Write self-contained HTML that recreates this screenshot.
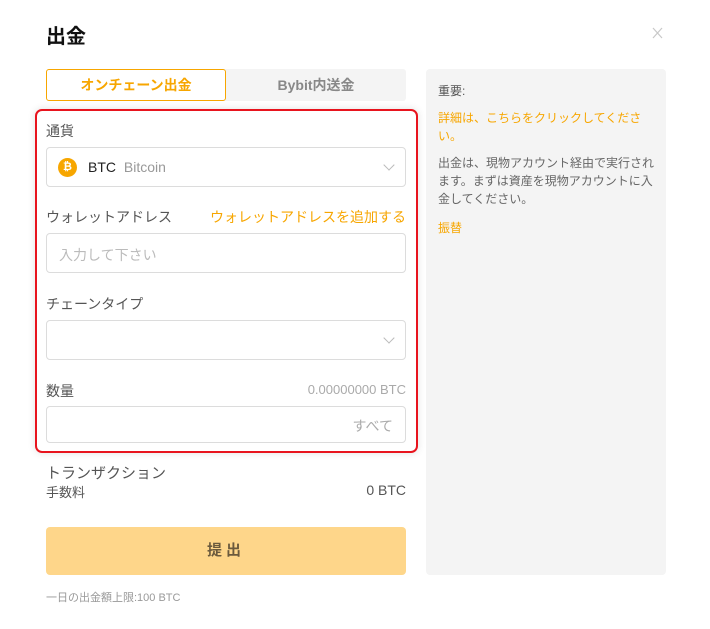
<!DOCTYPE html>
<html><head><meta charset="utf-8"><style>
*{margin:0;padding:0;box-sizing:border-box}
body{width:710px;height:629px;background:#fff;font-family:"Liberation Sans","Noto Sans CJK JP",sans-serif;position:relative;overflow:hidden;color:#333}
.a{position:absolute;white-space:nowrap}
.box{position:absolute;left:46px;width:360px;border:1px solid #dcdcdc;border-radius:4px;background:#fff}
.chev{position:absolute;right:12px;width:8px;height:8px;border-right:1px solid #bbb;border-bottom:1px solid #bbb;transform:rotate(45deg)}
.lbl{font-size:14px;color:#555}
</style></head><body>
<div class="a" style="left:46px;top:20px;font-size:20px;font-weight:bold;color:#111">出金</div>
<svg class="a" style="left:652px;top:27px" width="11" height="12" viewBox="0 0 11 12"><path d="M1 1L10 11M10 1L1 11" stroke="#c8c8c8" stroke-width="1.2" fill="none"/></svg>

<div class="a" style="left:46px;top:69px;width:360px;height:32px;background:#f4f4f4;border-radius:3px"></div>
<div class="a" style="left:46px;top:69px;width:180px;height:32px;border:1px solid #f7a600;border-radius:3px;background:#fff;text-align:center;line-height:30px;font-size:14px;font-weight:bold;color:#f7a600">オンチェーン出金</div>
<div class="a" style="left:226px;top:69px;width:180px;height:32px;text-align:center;line-height:32px;font-size:14px;font-weight:bold;color:#888">Bybit内送金</div>

<div class="a" style="left:35px;top:109px;width:383px;height:344px;border:2px solid #e8141e;border-radius:7px;box-shadow:0 0 8px rgba(0,0,0,.12)"></div>

<div class="a lbl" style="left:46px;top:121px">通貨</div>
<div class="box" style="top:147px;height:40px">
 <div class="a" style="left:11px;top:10px;width:19px;height:19px;border-radius:50%;background:#f7a600;color:#fff;font-size:11px;font-weight:bold;text-align:center;line-height:19px">₿</div>
 <div class="a" style="left:41px;top:11px;font-size:14px;color:#222">BTC <span style="color:#999;margin-left:4px">Bitcoin</span></div>
 <div class="chev" style="top:13px"></div>
</div>

<div class="a lbl" style="left:46px;top:207px">ウォレットアドレス</div>
<div class="a" style="right:304px;top:207px;font-size:14px;color:#f7a600">ウォレットアドレスを追加する</div>
<div class="box" style="top:233px;height:40px"><div class="a" style="left:12px;top:11px;font-size:14px;color:#bbb">入力して下さい</div></div>

<div class="a lbl" style="left:46px;top:294px">チェーンタイプ</div>
<div class="box" style="top:320px;height:40px"><div class="chev" style="top:13px"></div></div>

<div class="a lbl" style="left:46px;top:381px">数量</div>
<div class="a" style="right:304px;top:382px;font-size:13px;color:#aaa">0.00000000 BTC</div>
<div class="box" style="top:406px;height:37px"><div class="a" style="right:12px;top:9px;font-size:14px;color:#aaa">すべて</div></div>

<div class="a" style="left:46px;top:462px;font-size:15px;color:#555">トランザクション</div>
<div class="a" style="left:46px;top:482px;font-size:13px;color:#555">手数料</div>
<div class="a" style="right:304px;top:482px;font-size:14px;color:#555">0 BTC</div>

<div class="a" style="left:46px;top:527px;width:360px;height:48px;background:#fed68a;border-radius:4px;text-align:center;line-height:48px;font-size:15px;font-weight:bold;color:#6b5a3d;letter-spacing:4px">提出</div>
<div class="a" style="left:46px;top:589px;font-size:11px;color:#999">一日の出金額上限:100 BTC</div>

<div class="a" style="left:426px;top:69px;width:240px;height:506px;background:#f4f4f4;border-radius:4px"></div>
<div class="a" style="left:438px;top:82px;font-size:12px;color:#555">重要:</div>
<div class="a" style="left:438px;top:109px;width:220px;white-space:normal;font-size:12px;line-height:18px;color:#f7a600">詳細は、こちらをクリックしてください。</div>
<div class="a" style="left:438px;top:154px;width:222px;white-space:normal;font-size:12px;line-height:18px;color:#666">出金は、現物アカウント経由で実行されます。まずは資産を現物アカウントに入金してください。</div>
<div class="a" style="left:438px;top:219px;font-size:12px;color:#f7a600">振替</div>
</body></html>
